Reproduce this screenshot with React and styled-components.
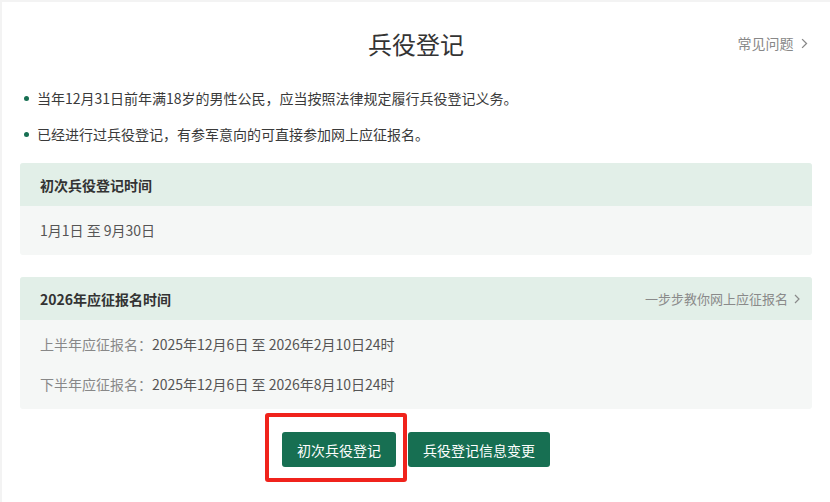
import React from 'react';
import styled, { createGlobalStyle } from 'styled-components';

const GlobalStyle = createGlobalStyle`
  html, body {
    margin: 0;
    padding: 0;
    background: #f3f3f3;
  }
  body {
    font-family: "Noto Sans CJK SC", "Noto Sans", sans-serif;
    color: #333;
  }
`;

// Page panel
const Panel = styled.div`
  margin: 2px 0 0 2px;
  background: #fff;
  min-height: 500px;
  padding: 0 18px;
  box-sizing: border-box;
`;

const Header = styled.div`
  height: 82px;
  display: grid;
  grid-template-columns: 1fr auto 1fr;
  align-items: center;
`;

const Title = styled.h1`
  grid-column: 2;
  margin: 0;
  font-size: 24px;
  font-weight: 400;
  color: #333;
`;

const MoreLink = styled.a`
  justify-self: end;
  display: flex;
  align-items: center;
  gap: 8px;
  font-size: 14px;
  color: #888;
  text-decoration: none;
  padding-right: 4px;
  cursor: pointer;
`;

const NoticeList = styled.ul`
  list-style: none;
  margin: 0;
  padding: 0 0 0 4px;
  display: flex;
  flex-direction: column;
  gap: 8px;
`;

const NoticeItem = styled.li`
  display: flex;
  align-items: center;
  gap: 8px;
  font-size: 14px;
  line-height: 28px;
  color: #3a3a3a;

  &::before {
    content: '';
    width: 5px;
    height: 5px;
    border-radius: 50%;
    background: #176f52;
    flex-shrink: 0;
  }
`;

const Card = styled.section`
  margin-top: ${p => p.$top}px;
  border-radius: 3px;
  overflow: hidden;
  background: #f5f7f6;
`;

const CardHead = styled.div`
  height: 43px;
  display: flex;
  align-items: center;
  justify-content: space-between;
  padding: 0 12px 0 20px;
  background: #e2efe8;
`;

const CardTitle = styled.h3`
  margin: 0;
  font-size: 14px;
  font-weight: 700;
  color: #333;
`;

const GuideLink = styled.a`
  display: flex;
  align-items: center;
  gap: 6px;
  font-size: 13px;
  color: #8a8a8a;
  cursor: pointer;
`;

const CardBody = styled.div`
  padding: 4px 20px 5px;
`;

const Row = styled.div`
  line-height: 40px;
  font-size: 14px;
  color: #555;
`;

const RowLabel = styled.span`
  color: #888;
`;

const Actions = styled.div`
  display: flex;
  justify-content: center;
  gap: 12px;
  margin-top: 23px;
`;

const ButtonWrap = styled.div`
  position: relative;
`;

const Button = styled.button`
  height: 35px;
  padding: 0 15px;
  border: none;
  border-radius: 3px;
  background: #176f52;
  color: #fff;
  font-family: inherit;
  font-size: 14px;
  cursor: pointer;
`;

// red callout frame around the first action
const Highlight = styled.span`
  position: absolute;
  top: -19px;
  right: -11px;
  bottom: -15px;
  left: -17px;
  border: 4px solid #f0231c;
  border-radius: 3px;
  pointer-events: none;
`;

const Chevron = ({ size = 10, color = '#999' }) => (
  <svg width={size * 0.6} height={size} viewBox="0 0 6 10" fill="none">
    <polyline points="1,1 5,5 1,9" stroke={color} strokeWidth="1.2" />
  </svg>
);

export default function App() {
  return (
    <>
      <GlobalStyle />
      <Panel>
        <Header>
          <Title>兵役登记</Title>
          <MoreLink>
            常见问题
            <Chevron size={11} color="#888" />
          </MoreLink>
        </Header>

        <NoticeList>
          <NoticeItem>当年12月31日前年满18岁的男性公民，应当按照法律规定履行兵役登记义务。</NoticeItem>
          <NoticeItem>已经进行过兵役登记，有参军意向的可直接参加网上应征报名。</NoticeItem>
        </NoticeList>

        <Card $top={15}>
          <CardHead>
            <CardTitle>初次兵役登记时间</CardTitle>
          </CardHead>
          <CardBody>
            <Row>1月1日 至 9月30日</Row>
          </CardBody>
        </Card>

        <Card $top={22}>
          <CardHead>
            <CardTitle>2026年应征报名时间</CardTitle>
            <GuideLink>
              一步步教你网上应征报名
              <Chevron size={10} color="#8a8a8a" />
            </GuideLink>
          </CardHead>
          <CardBody>
            <Row>
              <RowLabel>上半年应征报名：</RowLabel>2025年12月6日 至 2026年2月10日24时
            </Row>
            <Row>
              <RowLabel>下半年应征报名：</RowLabel>2025年12月6日 至 2026年8月10日24时
            </Row>
          </CardBody>
        </Card>

        <Actions>
          <ButtonWrap>
            <Button>初次兵役登记</Button>
            <Highlight />
          </ButtonWrap>
          <ButtonWrap>
            <Button>兵役登记信息变更</Button>
          </ButtonWrap>
        </Actions>
      </Panel>
    </>
  );
}
